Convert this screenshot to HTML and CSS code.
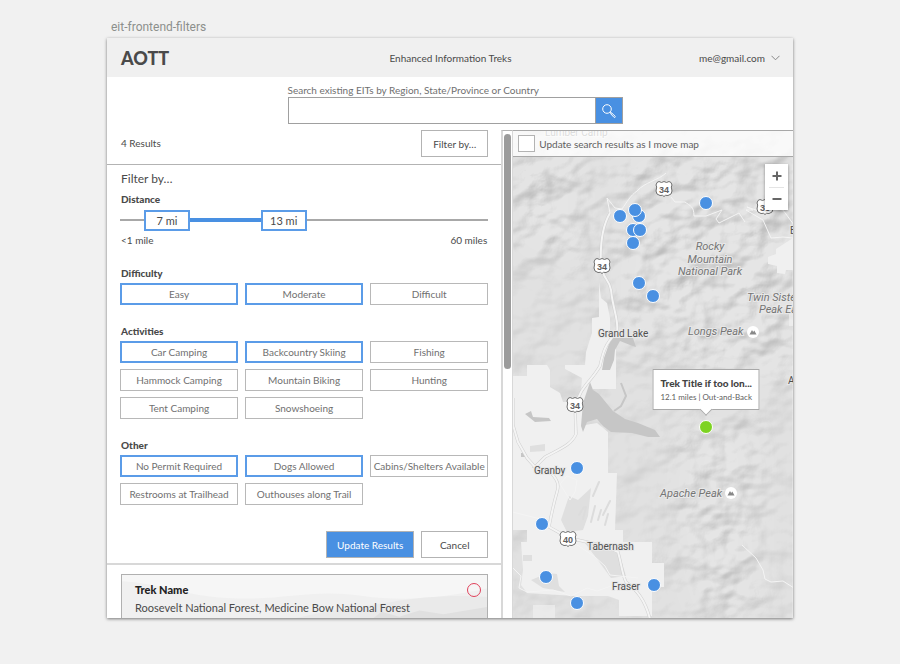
FILE: index.html
```html
<!DOCTYPE html>
<html lang="en">
<head>
<meta charset="utf-8">
<meta name="viewport" content="width=device-width, initial-scale=1">
<title>AOTT – Enhanced Information Treks</title>
<link rel="stylesheet" href="styles.css">
</head>
<body>
<p class="frame-name">eit-frontend-filters</p>
<div class="app">
  <header class="topbar">
    <h1 class="brand">AOTT</h1>
    <p class="tagline">Enhanced Information Treks</p>
    <button class="account" type="button">me@gmail.com
      <svg width="9" height="6" viewBox="0 0 9 6" aria-hidden="true"><path d="M.5.8 4.500 4.800 8.500.8" fill="none" stroke="#888"/></svg>
    </button>
  </header>

  <form class="search">
    <label for="q">Search existing EITs by Region, State/Province or Country</label>
    <div class="search-row">
      <input id="q" type="text">
      <button type="button" aria-label="Search">
        <svg width="16" height="16" viewBox="0 0 16 16" fill="none" stroke="#fff" aria-hidden="true"><circle cx="6" cy="6" r="4.300"/><path d="M9.200 9.200l1.300 1.300M10.400 9.700l3.800 3.600a.8.8 0 0 1-1.100 1.100L9.500 10.600z"/></svg>
      </button>
    </div>
  </form>

  <main class="content">
    <section class="results">
      <div class="results-bar">
        <span>4 Results</span>
        <button class="btn" type="button">Filter by…</button>
      </div>

      <form class="filters">
        <h2>Filter by…</h2>
        <fieldset>
          <legend>Distance</legend>
          <div class="range">
            <span class="range-fill" style="left:13%;width:31%"></span>
            <input type="range" min="0" max="60" value="7" aria-label="Minimum distance">
            <input type="range" min="0" max="60" value="13" aria-label="Maximum distance">
            <output style="left:6.500%">7 mi</output>
            <output style="left:38.200%">13 mi</output>
          </div>
          <div class="range-ends"><span>&lt;1 mile</span><span>60 miles</span></div>
        </fieldset>
        <fieldset>
          <legend>Difficulty</legend>
          <div class="chips">
            <button type="button" aria-pressed="true">Easy</button>
            <button type="button" aria-pressed="true">Moderate</button>
            <button type="button" aria-pressed="false">Difficult</button>
          </div>
        </fieldset>
        <fieldset>
          <legend>Activities</legend>
          <div class="chips">
            <button type="button" aria-pressed="true">Car Camping</button>
            <button type="button" aria-pressed="true">Backcountry Skiing</button>
            <button type="button" aria-pressed="false">Fishing</button>
            <button type="button" aria-pressed="false">Hammock Camping</button>
            <button type="button" aria-pressed="false">Mountain Biking</button>
            <button type="button" aria-pressed="false">Hunting</button>
            <button type="button" aria-pressed="false">Tent Camping</button>
            <button type="button" aria-pressed="false">Snowshoeing</button>
          </div>
        </fieldset>
        <fieldset>
          <legend>Other</legend>
          <div class="chips">
            <button type="button" aria-pressed="true">No Permit Required</button>
            <button type="button" aria-pressed="true">Dogs Allowed</button>
            <button type="button" aria-pressed="false">Cabins/Shelters Available</button>
            <button type="button" aria-pressed="false">Restrooms at Trailhead</button>
            <button type="button" aria-pressed="false">Outhouses along Trail</button>
          </div>
        </fieldset>
        <div class="actions">
          <button class="btn primary" type="button">Update Results</button>
          <button class="btn" type="button">Cancel</button>
        </div>
      </form>

      <article class="trek">
        <svg class="trek-hills" viewBox="0 0 366 80" preserveAspectRatio="none" aria-hidden="true">
          <path d="M0 5c40 2 60 12 110 14s80-8 130-2 90 0 126-6v69H0z" fill="#f0f0f0"/>
          <path d="M170 36c40-8 70-10 100-14s60-6 96-4v62H150z" fill="#eaeaea"/>
          <path d="M220 42l16-6 10 3 14-9 18 4 20-5 24 3 44-6v54H200z" fill="#e0e0e0"/>
        </svg>
        <div class="trek-text">
          <h3>Trek Name</h3>
          <p>Roosevelt National Forest, Medicine Bow National Forest</p>
          <p>Colorado, USA</p>
        </div>
        <span class="trek-mark"></span>
      </article>
    </section>

    <div class="scroll"><span></span></div>

    <section class="map" aria-label="Map">
      <svg class="terrain" width="100%" height="100%" aria-hidden="true">
        <defs>
          <filter id="relief" x="0" y="0" width="100%" height="100%" color-interpolation-filters="sRGB">
            <feTurbulence type="fractalNoise" baseFrequency=".026 .034" numOctaves="3" seed="11"/>
            <feColorMatrix values="0 0 0 0 0  0 0 0 0 0  0 0 0 0 0  1 0 0 0 0"/>
            <feDiffuseLighting surfaceScale="9" lighting-color="#fff" diffuseConstant="1.150"><feDistantLight azimuth="225" elevation="50"/></feDiffuseLighting>
            <feGaussianBlur stdDeviation=".5"/>
          </filter>
          <filter id="soft"><feGaussianBlur stdDeviation="18"/></filter>
          <mask id="ranges">
            <rect width="100%" height="100%" fill="#555"/>
            <g fill="#fff" filter="url(#soft)">
              <path d="M0 20h75v110H0zM110 20h170v170H150l-40 60-10-70zM160 190h130v60H160zM175 290h70v200h-60l-20-90z"/>
            </g>
          </mask>
          <g id="shield">
            <path d="M-7-6.500 -5-7.500 -2.500-6.500 0-7.500 2.500-6.500 5-7.500 7-6.500 8-4 7.300-2 8 2 7 5 4 6.500 1.500 6.300 0 7.500 -1.500 6.300 -4 6.500 -7 5 -8 2 -7.300-2 -8-4z" fill="#fff" stroke="#707070"/>
          </g>
          <g id="peak"><circle r="6" fill="#fff"/><path d="M-3.500 2.500-1-2 .2 0 1.300-1.500 3.500 2.500z" fill="#888"/></g>
        </defs>
        <rect width="100%" height="100%" fill="#dfdfdf"/>
        <g mask="url(#ranges)"><rect width="100%" height="100%" filter="url(#relief)" opacity=".2"/></g>
        <g fill="#f0f0f0">
          <path d="M86 152 88 168 94 173 97 188 97 213 103 215 103 259 80 259 72 295 84 293 95 302 95 343 104 343 102 400 110 400 110 412 139 412 139 433 151 433 151 457 139 457 139 486 106 486 106 470 95 466 62 466 14 463 8 455 10 440 8 412 14 412 14 400 0 400 0 246 14 246 14 235 34 235 37 240 37 257 47 263 50 272 63 272 68 262 69 248 52 239 52 235 72 235 73 222 79 203 79 188 86 187z"/>
          <path d="M255 127 263 124 263 119 280 108 300 108 300 140 273 140 272 144 264 143 264 136 255 134z"/>
          <path d="M20 475h22v14H20zM276 180h5v16h-5z" opacity=".7"/>
        </g>
        <g fill="#dfdfdf">
          <path d="M65 370 78 358 75 386 70 400 54 402 48 390 56 366zM72 413 105 420 113 446 98 448 84 429zM17 316 32 314 32 321 17 322zM10 425h9v6h-9zM18 450 35 443 44 444 46 456 52 462 30 458z"/>
        </g>
        <g fill="#c6c6c6">
          <path d="M77 252 80 260 86 264 95 275 100 281 112 289 125 293 142 300 147 307 135 307 119 303 98 302 90 296 84 289 74 292 70 302 68 296 70 273z"/>
          <path d="M100 208H120L123 217 117 215 107 211 102 220 101 230 97 240H89L91 228 96 214z"/>
          <path d="M12 284 18 281 20 287 36 288 38 291 22 292z"/>
          <path d="M8 323h5v4H8z"/>
        </g>
        <path d="M108 253 113 266 108 276 101 281" fill="none" stroke="#c6c6c6" stroke-width="2"/>
        <g fill="none" stroke="#dcdcdc" stroke-width="2" stroke-linecap="round">
          <path d="M70 389 73 377M78 392 82 376M85 390 88 380M66 385 71 377M90 385 97 371M80 366 86 352M92 395 95 384"/>
        </g>
        <g fill="none" stroke="#cfcfcf" stroke-width="3">
          <path id="highway" d="M97 83C90 95 87 115 88 135C90 150 96 148 98 160C100 180 106 190 104 202C92 214 90 222 87 236C80 248 74 252 68 262L62 275L63 304C58 316 44 320 32 327L22 337 35 340C46 350 46 356 44 362C40 376 38 386 36 397L56 408 92 416 105 422C109 436 109 444 113 452C124 460 132 470 137 489"/>
          <path d="M0 268V295L5 312 14 328 22 337"/>
        </g>
        <g fill="none" stroke="#f4f4f4">
          <path stroke-width="2" d="M97 83C90 95 87 115 88 135C90 150 96 148 98 160C100 180 106 190 104 202C92 214 90 222 87 236C80 248 74 252 68 262L62 275L63 304C58 316 44 320 32 327L22 337 35 340C46 350 46 356 44 362C40 376 38 386 36 397L56 408 92 416 105 422C109 436 109 444 113 452C124 460 132 470 137 489"/>
          <path d="M0 268V295L5 312 14 328 22 337" stroke-width="2"/>
          <path d="M97 83 94 68 102 78 109 79C114 72 117 66 124 61C132 52 146 50 153 43M158 67 162 72 172 72C177 76 181 76 181 86L193 86 209 80 203 89 206 93 220 86 226 83 232 92M234 77 240 80 233 80 250 90 258 108 270 107 280 108M234 77 243 80 258 78 270 80 281 95M0 382 28 389M47 354 54 346 64 350 62 362 57 370zM64 415 82 427 92 436 97 445 125 448M0 438 8 446 6 458 14 462 40 460 58 466 74 458 84 461 98 456 115 460M229 415 243 428 250 440 252 449 258 452 270 451 281 458"/>
        </g>
        <g class="map-town">
          <text x="32" y="6">Lumber Camp</text>
          <text x="85" y="207">Grand Lake</text>
          <text x="21" y="344">Granby</text>
          <text x="74" y="420">Tabernash</text>
          <text x="99" y="460">Fraser</text>
          <text x="277" y="104">Estes Park</text>
          <text x="275" y="254">Allenspark</text>
        </g>
        <g class="map-peak">
          <text x="197" y="120" text-anchor="middle">Rocky</text>
          <text x="197" y="133" text-anchor="middle">Mountain</text>
          <text x="197" y="145" text-anchor="middle">National Park</text>
          <text x="234" y="171">Twin Sisters</text>
          <text x="246" y="183">Peak East</text>
          <text x="175" y="205">Longs Peak</text>
          <text x="147" y="367">Apache Peak</text>
        </g>
        <use href="#peak" x="240" y="202"/><use href="#peak" x="218" y="363"/>
        <g class="map-route">
          <use href="#shield" x="151" y="59"/><text x="151" y="63">34</text>
          <use href="#shield" x="89" y="136"/><text x="89" y="140">34</text>
          <use href="#shield" x="62" y="275"/><text x="62" y="279">34</text>
          <use href="#shield" x="55" y="409"/><text x="55" y="413">40</text>
          <use href="#shield" x="252" y="77"/><text x="252" y="81">36</text>
        </g>
      </svg>

      <label class="map-follow"><input type="checkbox"> Update search results as I move map</label>

      <div class="zoom">
        <button type="button" aria-label="Zoom in"><svg width="10" height="10" viewBox="0 0 10 10"><path d="M5 .5v9M.5 5h9" stroke="#666" stroke-width="2"/></svg></button>
        <button type="button" aria-label="Zoom out"><svg width="10" height="10" viewBox="0 0 10 10"><path d="M.5 5h9" stroke="#666" stroke-width="2"/></svg></button>
      </div>

      <button class="pin" type="button" aria-label="Trek" style="left:107px;top:86px"></button>
      <button class="pin" type="button" aria-label="Trek" style="left:126px;top:86px"></button>
      <button class="pin" type="button" aria-label="Trek" style="left:122px;top:80px"></button>
      <button class="pin" type="button" aria-label="Trek" style="left:120px;top:100px"></button>
      <button class="pin" type="button" aria-label="Trek" style="left:127px;top:100px"></button>
      <button class="pin" type="button" aria-label="Trek" style="left:120px;top:113px"></button>
      <button class="pin" type="button" aria-label="Trek" style="left:193px;top:73px"></button>
      <button class="pin" type="button" aria-label="Trek" style="left:126px;top:153px"></button>
      <button class="pin" type="button" aria-label="Trek" style="left:140px;top:166px"></button>
      <button class="pin" type="button" aria-label="Trek" style="left:64px;top:338px"></button>
      <button class="pin" type="button" aria-label="Trek" style="left:29px;top:394px"></button>
      <button class="pin" type="button" aria-label="Trek" style="left:33px;top:447px"></button>
      <button class="pin" type="button" aria-label="Trek" style="left:64px;top:473px"></button>
      <button class="pin" type="button" aria-label="Trek" style="left:141px;top:455px"></button>
      <button class="pin active" type="button" aria-label="Selected trek" style="left:193px;top:297px"></button>

      <div class="callout" style="left:193px;top:280px">
        <strong>Trek Title if too lon...</strong>
        <span>12.1 miles | Out-and-Back</span>
      </div>
    </section>
  </main>
</div>
</body>
</html>
```

FILE: styles.css
```css
* { box-sizing: border-box; }

body {
  margin: 0;
  height: 100vh;
  display: flex;
  flex-direction: column;
  padding: 20px 107px 46px;
  background: #f1f1f1;
  color: #4a4a4a;
  font: 10px/14px Lato, "Open Sans", sans-serif;
}

h1, h2, h3, p, fieldset, legend { margin: 0; padding: 0; border: 0; }
button, input { font: inherit; color: inherit; margin: 0; }
button { cursor: pointer; }

.frame-name {
  padding-left: 4px;
  color: #8c8f8c;
  font: 12px/14px Roboto, sans-serif;
  margin-bottom: 4px;
}

.app {
  flex: 1;
  min-height: 0;
  display: flex;
  flex-direction: column;
  overflow: hidden;
  background: #fff;
  box-shadow: 0 1px 3px rgba(0, 0, 0, .5);
}

.topbar {
  flex: none;
  display: grid;
  grid-template-columns: 1fr auto 1fr;
  align-items: center;
  height: 39px;
  padding: 0 13px 0 14px;
  background: #f0f0f0;
}
.brand { font-size: 18px; line-height: 22px; font-weight: 900; }
.account {
  justify-self: end;
  display: flex;
  align-items: center;
  gap: 6px;
  padding: 0;
  border: 0;
  background: none;
}

.search {
  flex: none;
  width: 335px;
  max-width: 100%;
  margin: 7px auto 6px;
  position: relative;
  left: 5px;
  color: #707070;
}
.search label { display: block; line-height: 13px; }
.search-row { display: flex; height: 27px; border: 1px solid #a0a0a0; }
.search input { flex: 1; min-width: 0; border: 0; padding: 0 8px; }
.search button {
  width: 27px;
  display: grid;
  place-items: center;
  border: 0;
  border-left: 1px solid #a0a0a0;
  padding: 0;
  background: #4990e2;
}

.content {
  flex: 1;
  min-height: 0;
  display: grid;
  grid-template-columns: 31fr 12px 22fr;
}

.results { min-width: 0; overflow: hidden; }
.results-bar {
  display: flex;
  justify-content: space-between;
  padding: 0 13px 7px 14px;
  border-bottom: 1px solid #b3b3b3;
  line-height: 27px;
}
.btn {
  height: 27px;
  min-width: 67px;
  padding: 0 10px;
  border: 1px solid #b3b3b3;
  background: #fff;
}
.btn.primary { background: #4990e2; color: #fff; }

.filters { padding: 6px 13px 5px; border-bottom: 2px solid #d8d8d8; }
.filters h2 { font-size: 12px; line-height: 16px; font-weight: 400; padding: 0 1px; }
.filters fieldset { margin-bottom: 14px; min-width: 0; }
.filters legend { padding: 5px 1px 3px; font-weight: 900; line-height: 14px; }

.range { position: relative; height: 21px; margin-top: 1px; }
.range::before {
  content: "";
  position: absolute;
  inset: 9px 0 auto;
  height: 2px;
  background: #a8a8a8;
}
.range-fill { position: absolute; top: 8px; height: 4px; background: #4990e2; }
.range input { position: absolute; inset: 0; width: 100%; height: 21px; opacity: 0; }
.range output {
  position: absolute;
  top: 0;
  width: 46px;
  border: 2px solid #5b9ce8;
  background: #fff;
  text-align: center;
  font-size: 11px;
  line-height: 17px;
  pointer-events: none;
}
.range-ends { display: flex; justify-content: space-between; padding: 2px 1px 0; }

.chips { display: grid; grid-template-columns: repeat(3, 1fr); gap: 6px 7px; }
.chips button {
  height: 22px;
  padding: 0;
  border: 1px solid #b8b8b8;
  background: #fff;
  color: #707070;
  white-space: nowrap;
}
.chips button[aria-pressed="true"] { border: 2px solid #5b9ce8; }

.actions { display: flex; justify-content: flex-end; gap: 7px; padding-top: 12px; }

.trek {
  position: relative;
  display: flex;
  justify-content: space-between;
  height: 100px;
  margin: 9px 13px 0 14px;
  padding: 6px;
  border: 1px solid #b0b0b0;
  background: #f6f6f6;
}
.trek-hills { position: absolute; inset: 0; width: 100%; height: 100%; }
.trek-text { position: relative; padding-left: 7px; font-size: 11px; line-height: 18px; }
.trek-text h3 { font-size: 11px; font-weight: 900; color: #222; }
.trek-mark {
  position: relative;
  width: 14px;
  height: 14px;
  margin-top: 2px;
  border: 1px solid #e0405a;
  border-radius: 50%;
}

.scroll {
  border: solid #d8d8d8;
  border-width: 1px 1px 0 2px;
  border-top-color: #b3b3b3;
  padding: 3px 1px 0;
}
.scroll span { display: block; height: 235px; border-radius: 4px; background: #9b9b9b; }

.map { position: relative; overflow: hidden; }
.terrain { position: absolute; inset: 0; }
.map-town { font: 10px Roboto, sans-serif; fill: #505050; }
.map-peak { font: italic 11px Roboto, sans-serif; fill: #757575; }
.map-town text, .map-peak text { paint-order: stroke; stroke: #e8e8e8; stroke-width: 2px; }
.map-route { font: bold 9px "Liberation Sans", sans-serif; fill: #606060; text-anchor: middle; }

.map-follow {
  position: relative;
  display: flex;
  align-items: center;
  gap: 4px;
  height: 27px;
  padding: 0 5px;
  border: solid #a8a8a8;
  border-width: 1px 0;
  background: rgba(255, 255, 255, .8);
  color: #606060;
}
.map-follow input {
  appearance: none;
  width: 17px;
  height: 17px;
  border: 1px solid #b3b3b3;
  background: #fff;
}

.zoom {
  position: absolute;
  top: 34px;
  right: 5px;
  width: 23px;
  padding: 0 4px;
  background: #fff;
  box-shadow: 0 1px 3px rgba(0, 0, 0, .4);
}
.zoom button {
  display: grid;
  place-items: center;
  width: 100%;
  height: 23px;
  padding: 0;
  border: 0;
  background: none;
}
.zoom button + button { border-top: 1px solid #e4e4e4; }

.pin {
  position: absolute;
  width: 14px;
  height: 14px;
  padding: 0;
  border: 1px solid #fff;
  border-radius: 50%;
  background: #4990e2;
  transform: translate(-50%, -50%);
}
.pin.active { background: #7dd321; }

.callout {
  position: absolute;
  transform: translate(-50%, -100%);
  width: 107px;
  height: 41px;
  padding: 6px 4px;
  border: 1px solid #a8a8a8;
  background: #fff;
  text-align: center;
  white-space: nowrap;
  color: #606060;
  font-size: 8px;
}
.callout strong { display: block; font-size: 10px; font-weight: 900; color: #444; }
.callout::after {
  content: "";
  position: absolute;
  left: 48px;
  bottom: -5px;
  width: 8px;
  height: 8px;
  border: solid #a8a8a8;
  border-width: 0 1px 1px 0;
  background: #fff;
  transform: rotate(45deg);
}
```
